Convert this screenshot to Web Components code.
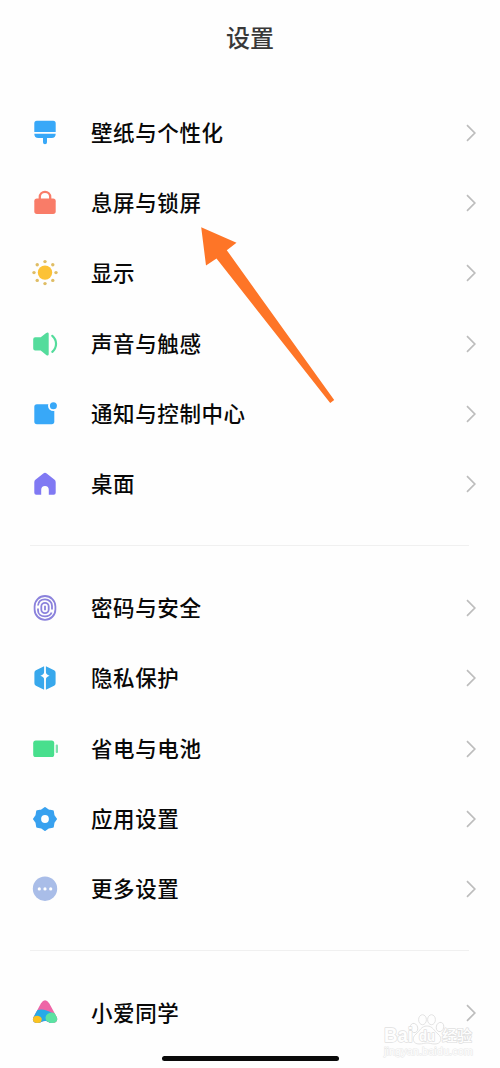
<!DOCTYPE html>
<html lang="zh-CN">
<head>
<meta charset="utf-8">
<title>设置</title>
<style>
html,body{margin:0;height:100%;background:#fefefe}
body{font-family:"Noto Sans CJK SC","Liberation Sans",sans-serif;overflow:hidden}
</style>
</head>
<body>
<settings-page></settings-page>
<script>
const icons = {
 brush:'<g fill="#38a8f8"><path d="M6.800 2.700h16.400a2.500 2.500 0 0 1 2.500 2.500V14H4.300V5.200a2.500 2.500 0 0 1 2.500-2.500z"/><path d="M4.300 15.700h21.400c0 2.800-1.400 4.200-4 4.200H17v4.400a2 2 0 0 1-4 0v-4.400H8.300c-2.600 0-4-1.400-4-4.200z"/></g>',
 lock:'<path d="M9.800 12V9a5.200 5.200 0 0 1 10.400 0v3" fill="none" stroke="#f97c68" stroke-width="2.300"/><rect x="4.300" y="10.600" width="21.400" height="15.300" rx="2.600" fill="#f97c68"/>',
 sun:'<circle cx="15" cy="14.600" r="7.200" fill="#fcc236"/><g fill="#dfbd65">'+[...Array(8)].map((_,i)=>`<circle cx="${15+11*Math.cos(i*Math.PI/4)}" cy="${14.6+11*Math.sin(i*Math.PI/4)}" r="1.700"/>`).join('')+'</g>',
 sound:'<path d="M5.200 8.200h5.500l5.500-4.300c1.500-1 2.500-.5 2.500 1v20c0 1.500-1 2-2.500 1l-5.500-4.300H5.200a2 2 0 0 1-2-2v-9.400a2 2 0 0 1 2-2z" fill="#54dc9c"/><path d="M22.300 6.800c5 4.300 5 11.700 0 16" fill="none" stroke="#54dc9c" stroke-width="2.200" stroke-linecap="round"/>',
 notice:'<rect x="4.300" y="5.200" width="20" height="20" rx="2.600" fill="#38a8f8"/><circle cx="23.400" cy="6.700" r="5.400" fill="#fefefe"/><circle cx="23.400" cy="6.700" r="3.500" fill="#38a8f8"/>',
 home:'<path d="M13.300 4.500q1.700-1.300 3.400 0l7.900 6.300q1.100.9 1.100 2.400v10.500a2 2 0 0 1-2 2h-4.900v-4.800a3.800 3.800 0 0 0-7.600 0v4.800H6.300a2 2 0 0 1-2-2V13.200q0-1.500 1.100-2.400z" fill="#8079f3"/>',
 finger:'<g fill="none" stroke="#8b82dc" stroke-width="1.800"><rect x="4.600" y="3" width="20.800" height="23.800" rx="10.400"/><path d="M8 12.500C8.400 8.600 11 6.400 15 6.400s7 2.700 7 6.600v3.600M8 15.500v1.700c0 4 3 6.200 7 6.200 3.200 0 5.600-1.300 6.600-3.900"/><rect x="11.300" y="9.800" width="7.400" height="10.400" rx="3.700"/><path d="M15 12.800v4.500"/></g>',
 privacy:'<path d="M14.100 3.200v23.600l-8.200-4q-1.500-.8-1.500-2.500V9.700q0-1.700 1.500-2.500zM15.900 3.200v23.600l8.200-4q1.500-.8 1.500-2.500V9.700q0-1.700-1.500-2.500z" fill="#38a8ec"/><path d="M15 7.300q.9 4.700 4.600 5.500-3.700.8-4.600 5.500-.9-4.700-4.600-5.500 3.700-.8 4.600-5.500z" fill="#fefefe"/>',
 battery:'<rect x="3.200" y="6.600" width="21" height="16.400" rx="2.600" fill="#48df8d"/><rect x="25.700" y="10.600" width="2.300" height="8.300" rx="1" fill="#7ee0ac"/>',
 gear:'<path d="M15 4L18.500 6.500 22.800 7.200 23.500 11.500 26 15 23.500 18.500 22.800 22.800 18.500 23.500 15 26 11.500 23.500 7.200 22.800 6.500 18.500 4 15 6.500 11.500 7.200 7.200 11.500 6.500z" fill="#38a1ef" stroke="#38a1ef" stroke-width="2" stroke-linejoin="round"/><circle cx="15" cy="15" r="3.900" fill="#fefefe"/>',
 more:'<circle cx="15" cy="14.700" r="12.200" fill="#a9bde8"/><g fill="#fff"><circle cx="9.300" cy="14.900" r="1.600"/><circle cx="15" cy="14.900" r="1.600"/><circle cx="20.700" cy="14.900" r="1.600"/></g>',
 ai:'<clipPath id="c"><path d="M11 5.300q4-6.300 8.200 0l7.400 13.500c1.700 3.500 0 6.200-4 6.200-4 0-4.600-2.100-7.600-2.100S10.800 25 7.200 25c-3.800 0-5.300-2.800-3.600-5.900z"/></clipPath><g clip-path="url(#c)"><path fill="#ee65a6" d="M0 0h30v30H0z"/><path fill="#26a9e9" d="M0 17c6-7 14-7 22-2v15H0z"/><ellipse cx="22" cy="20" rx="6.500" ry="5.600" fill="#5be2a2"/><ellipse cx="6" cy="22.500" rx="6" ry="4.300" transform="rotate(-25 6 22.500)" fill="#fbc321"/></g>'
};
class SettingsIcon extends HTMLElement{
 connectedCallback(){
  this.attachShadow({mode:'open'}).innerHTML=`<style>:host{display:block;width:30px;height:30px}svg{display:block}</style><svg width="30" height="30" viewBox="0 0 30 30">${icons[this.getAttribute('name')]}</svg>`;
 }
}
class SettingsRow extends HTMLElement{
 connectedCallback(){
  this.attachShadow({mode:'open'}).innerHTML=`<style>
  :host{display:flex;align-items:center;height:70.200px;padding:0 23px 0 30px;box-sizing:border-box}
  .label{flex:1;margin-left:31px;padding-bottom:2px;font-size:21.500px;line-height:30px;font-weight:500;letter-spacing:.6px;color:#080808;white-space:nowrap}
  .arrow{display:block}
  </style><settings-icon name="${this.getAttribute('icon')}"></settings-icon><span class="label"><slot></slot></span><svg class="arrow" width="12" height="20" viewBox="0 0 12 20"><path d="M2 2.200 9.800 10 2 17.800" fill="none" stroke="#bdbdbd" stroke-width="1.700"/></svg>`;
 }
}
class SettingsGroup extends HTMLElement{
 connectedCallback(){
  this.attachShadow({mode:'open'}).innerHTML=`<style>
  :host{display:block}
  :host([divided])::before{content:"";display:block;height:1px;margin:26px 31px 27px 30px;background:#f0f0f0}
  </style><slot></slot>`;
 }
}
class PointerArrow extends HTMLElement{
 connectedCallback(){
  this.attachShadow({mode:'open'}).innerHTML=`<style>:host{position:absolute;left:190px;top:220px}svg{display:block}</style><svg width="160" height="190" viewBox="0 0 160 190"><path d="M11.200 7.200 46.500 22.800 36.800 30.200 144.200 180 140.200 183 26.500 38.500 16 45.500z" fill="#fe7527"/></svg>`;
 }
}
class PageWatermark extends HTMLElement{
 connectedCallback(){
  this.attachShadow({mode:'open'}).innerHTML=`<style>
  :host{position:absolute;left:380px;top:1010px}svg{display:block}
  text{font-family:"Liberation Sans","Noto Sans CJK SC",sans-serif;paint-order:stroke;stroke-linejoin:round}
  </style><svg width="110" height="50" viewBox="0 0 110 50">
  <g fill="#fefefe" stroke="#e0e0e0" stroke-width=".9">
  <ellipse cx="34" cy="18" rx="3.700" ry="4.700" transform="rotate(-15 34 18)"/><ellipse cx="42.500" cy="9.700" rx="3.900" ry="5"/><ellipse cx="51.500" cy="9.700" rx="3.900" ry="5"/><ellipse cx="60" cy="17" rx="3.700" ry="4.700" transform="rotate(15 60 17)"/>
  <path d="M47 16c6 0 7 5 11 8 5 4 3 10-3 10-4 0-5-1-8-1s-4 1-8 1c-6 0-8-6-3-10 4-3 5-8 11-8z"/></g>
  <g fill="#fefefe" stroke="#e0e0e0" stroke-width="1.500">
  <text x="4" y="31.500" font-size="21" font-weight="700" textLength="29" lengthAdjust="spacingAndGlyphs">Bai</text>
  <text x="39" y="30.500" font-size="14" font-weight="700" textLength="16" lengthAdjust="spacingAndGlyphs">du</text>
  <text x="62" y="30.500" font-size="15" font-weight="500" textLength="30" lengthAdjust="spacingAndGlyphs">经验</text></g>
  <text x="4" y="45" font-size="10" fill="#fefefe" stroke="#e8e8e8" stroke-width="1" textLength="89" lengthAdjust="spacingAndGlyphs">jingyan.baidu.com</text>
  </svg>`;
 }
}
class SettingsPage extends HTMLElement{
 connectedCallback(){
  this.attachShadow({mode:'open'}).innerHTML=`<style>
  :host{display:flex;flex-direction:column;position:relative;width:500px;height:1068px;overflow:hidden;background:#fefefe}
  h1{margin:0;padding-top:19px;height:78px;box-sizing:border-box;text-align:center;font-size:24px;line-height:36px;font-weight:500;color:#383838}
  main{padding-top:20px}
  .home{position:absolute;left:161.500px;top:1056px;width:177px;height:4.500px;border-radius:3px;background:#0a0a0a}
  </style>
  <h1>设置</h1>
  <main>
  <settings-group><settings-row icon="brush">壁纸与个性化</settings-row><settings-row icon="lock">息屏与锁屏</settings-row><settings-row icon="sun">显示</settings-row><settings-row icon="sound">声音与触感</settings-row><settings-row icon="notice">通知与控制中心</settings-row><settings-row icon="home">桌面</settings-row></settings-group>
  <settings-group divided><settings-row icon="finger">密码与安全</settings-row><settings-row icon="privacy">隐私保护</settings-row><settings-row icon="battery">省电与电池</settings-row><settings-row icon="gear">应用设置</settings-row><settings-row icon="more">更多设置</settings-row></settings-group>
  <settings-group divided><settings-row icon="ai">小爱同学</settings-row></settings-group>
  </main>
  <div class="home"></div>
  <pointer-arrow></pointer-arrow><page-watermark></page-watermark>`;
 }
}
customElements.define('settings-icon',SettingsIcon);
customElements.define('settings-row',SettingsRow);
customElements.define('settings-group',SettingsGroup);
customElements.define('pointer-arrow',PointerArrow);
customElements.define('page-watermark',PageWatermark);
customElements.define('settings-page',SettingsPage);
</script>
</body>
</html>
